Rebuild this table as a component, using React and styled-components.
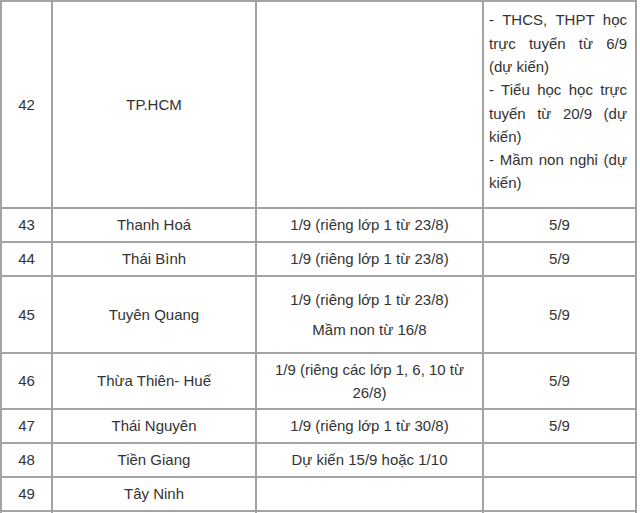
import React from "react";
import styled, { createGlobalStyle } from "styled-components";

const GlobalStyle = createGlobalStyle`
  html, body {
    margin: 0;
    padding: 0;
    background: #ffffff;
    overflow: hidden;
  }
`;

const Table = styled.table`
  border-collapse: collapse;
  table-layout: fixed;
  width: 637px;
  font-family: "Liberation Sans", Arial, sans-serif;
  font-size: 15px;
  line-height: 23.3px;
  color: #333333;
`;

const Row = styled.tr`
  height: ${({ h }) => h}px;
`;

const Cell = styled.td`
  border: 2px solid #a3a3a3;
  padding: 3px 5px;
  text-align: center;
  vertical-align: middle;
`;

const NoteCell = styled(Cell)`
  text-align: justify;
  padding: 6px 8px 12px 5px;
`;

const Lines = styled.div`
  display: flex;
  flex-direction: column;
  align-items: center;
  gap: ${({ gap }) => gap || 0}px;
`;

const rows = [
  { no: 43, name: "Thanh Hoá", start: ["1/9 (riêng lớp 1 từ 23/8)"], other: "5/9", h: 34 },
  { no: 44, name: "Thái Bình", start: ["1/9 (riêng lớp 1 từ 23/8)"], other: "5/9", h: 34 },
  {
    no: 45,
    name: "Tuyên Quang",
    start: ["1/9 (riêng lớp 1 từ 23/8)", "Mầm non từ 16/8"],
    other: "5/9",
    h: 77,
    gap: 6,
  },
  {
    no: 46,
    name: "Thừa Thiên- Huế",
    start: ["1/9 (riêng các lớp 1, 6, 10 từ 26/8)"],
    other: "5/9",
    h: 56,
  },
  { no: 47, name: "Thái Nguyên", start: ["1/9 (riêng lớp 1 từ 30/8)"], other: "5/9", h: 34 },
  { no: 48, name: "Tiền Giang", start: ["Dự kiến 15/9 hoặc 1/10"], other: "", h: 34 },
  { no: 49, name: "Tây Ninh", start: [], other: "", h: 34 },
  { no: "", name: "", start: [], other: "", h: 34 },
];

export default function App() {
  return (
    <>
      <GlobalStyle />
      <Table>
        <colgroup>
          <col style={{ width: 51 }} />
          <col style={{ width: 204 }} />
          <col style={{ width: 227 }} />
          <col style={{ width: 153 }} />
        </colgroup>
        <tbody>
          <Row h={207}>
            <Cell>42</Cell>
            <Cell>TP.HCM</Cell>
            <Cell />
            <NoteCell>
              - THCS, THPT học trực tuyến từ 6/9 (dự kiến)
              <br />- Tiểu học học trực tuyến từ 20/9 (dự kiến)
              <br />- Mầm non nghỉ (dự kiến)
            </NoteCell>
          </Row>
          {rows.map((r, i) => (
            <Row key={i} h={r.h}>
              <Cell>{r.no}</Cell>
              <Cell>{r.name}</Cell>
              <Cell>
                <Lines gap={r.gap}>
                  {r.start.map((s) => (
                    <span key={s}>{s}</span>
                  ))}
                </Lines>
              </Cell>
              <Cell>{r.other}</Cell>
            </Row>
          ))}
        </tbody>
      </Table>
    </>
  );
}
